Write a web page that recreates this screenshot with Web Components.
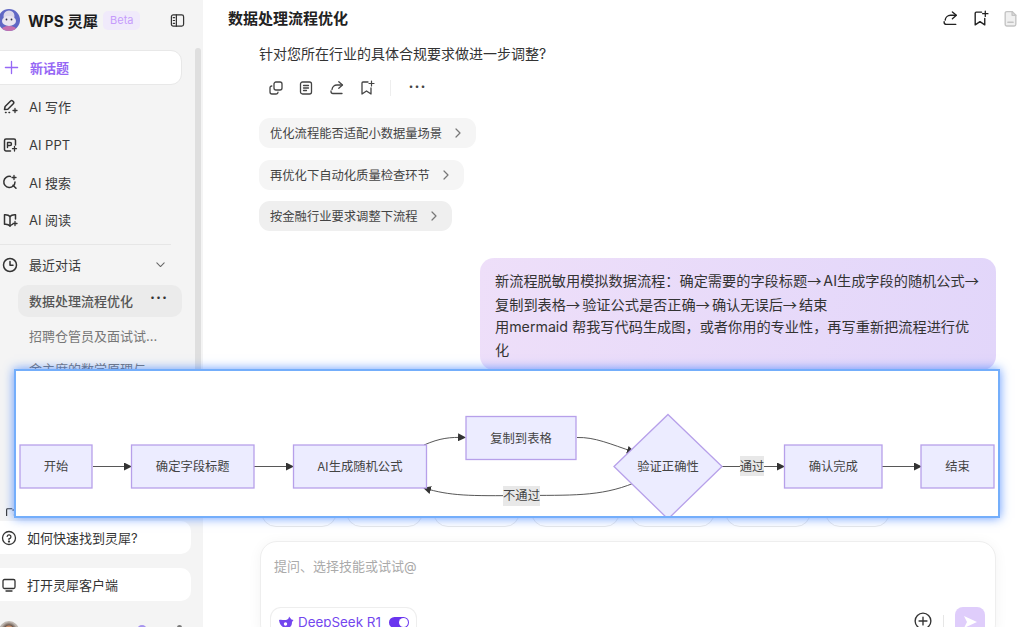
<!DOCTYPE html>
<html lang="zh"><head><meta charset="utf-8"><title>WPS 灵犀</title>
<style>
html,body{margin:0;height:100%;overflow:hidden;background:#fff}
body{font-family:Inter,"Noto Sans CJK SC",sans-serif;color:#222}
</style></head><body>
<app-shell>
  <side-bar slot="side"></side-bar>
  <main-pane slot="main"></main-pane>
</app-shell>
<flow-popup></flow-popup>
<script>
const I={
 plus:'<path d="M8 1.500v13M1.500 8h13" stroke-width="1.400"/>',
 write:'<path d="M2.500 10.500l.6-3L8.600 2a1.500 1.500 0 0 1 2.100 0l.6.6a1.500 1.500 0 0 1 0 2.100L5.800 10.200z" stroke-width="1.500"/><path d="M13 9.500v4M11 11.500h4" stroke-width="1.300"/><path d="M3.500 13.500h.6M7 13.500h.6" stroke-width="1.500"/>',
 ppt:'<path d="M8.500 14H4a1.500 1.500 0 0 1-1.500-1.500v-9A1.500 1.500 0 0 1 4 2h8a1.500 1.500 0 0 1 1.500 1.500V8" stroke-width="1.500"/><path d="M5.500 10.500V5.500H8a1.500 1.500 0 0 1 0 3H5.500" stroke-width="1.400"/><path d="M12.500 9.500v4.500M10.500 11.700h4" stroke-width="1.300"/>',
 search:'<path d="M8.500 2.400A5.600 5.600 0 1 0 13 8" stroke-width="1.500"/><path d="M11 11.200l3 3" stroke-width="1.500"/><path d="M12 1.500v4M10 3.500h4" stroke-width="1.300"/>',
 read:'<path d="M8 4.500C6.800 3 5 2.500 2.500 2.700v9.600C5 12 6.800 12.600 8 14c.7-.8 1.400-1.300 2.500-1.600" stroke-width="1.500"/><path d="M8 4.500v9.500M8 4.500C9.200 3 11 2.500 13.500 2.700V7" stroke-width="1.500"/><path d="M13 9.500v4M11 11.500h4" stroke-width="1.300"/>',
 clock:'<circle cx="8" cy="8" r="6.500" stroke-width="1.500"/><path d="M8 4.500V8.300h3" stroke-width="1.500"/>',
 down:'<path d="M3.500 6l4.500 4.500L12.500 6" stroke-width="1.300"/>',
 help:'<circle cx="8" cy="8" r="6.500"/><path d="M6.200 6.300A1.900 1.900 0 1 1 8 8.700v1"/><circle cx="8" cy="11.600" r=".5" fill="currentColor"/>',
 screen:'<rect x="2" y="2.500" width="12" height="9" rx="1.500"/><path d="M5 14h6"/>',
 panel:'<rect x="1.500" y="2" width="13" height="12" rx="2"/><path d="M6.800 2v12M3.500 5h1.400M3.500 8h1.400M3.500 11h1.400"/>',
 share:'<path d="M9.800 1.800l3.700 3.200-3.700 3.200"/><path d="M13 5H8a5 5 0 0 0-5 4.500"/><path d="M2 11v.5A2 2 0 0 0 4 13.500h9"/>',
 mark:'<path d="M9 2H4a1 1 0 0 0-1 1v11l4.500-3 4.500 3V8"/><path d="M12.500 1v5M10 3.500h5" stroke-width="1.200"/>',
 copy:'<rect x="6" y="2" width="8" height="8" rx="2"/><path d="M3.800 6A1.800 1.800 0 0 0 2 7.800V12a2 2 0 0 0 2 2h4.200A1.800 1.800 0 0 0 10 12.200"/>',
 note:'<rect x="2.500" y="2" width="11" height="12" rx="2"/><path d="M5.500 5.500h5M5.500 8h5M5.500 10.500h3"/>',
 doc:'<path d="M3 3a1.500 1.500 0 0 1 1.500-1.500H9.500L13 5v8.500A1.500 1.500 0 0 1 11.500 15h-7A1.500 1.500 0 0 1 3 13.500z" fill="#f0f0f0"/><path d="M9.500 1.500V5H13M5.500 11.500h5"/>',
 add:'<circle cx="8" cy="8" r="7" stroke-width="1.200"/><path d="M8 4.500v7M4.500 8h7" stroke-width="1.200"/>'
};
const icon=(n,s=16,c='currentColor')=>`<svg width="${s}" height="${s}" viewBox="0 0 16 16" fill="none" stroke="${c}" stroke-width="1.300" stroke-linecap="round" stroke-linejoin="round" style="display:block;flex:none">${I[n]}</svg>`;
class Base extends HTMLElement{
 constructor(){super();this.attachShadow({mode:'open'}).innerHTML=this.markup()}
 markup(){return ''}
}
customElements.define('app-shell',class extends Base{markup(){return `<style>
 :host{display:flex;width:1024px;height:627px;overflow:hidden}
 ::slotted([slot=side]){flex:none;width:203px}
 ::slotted([slot=main]){flex:1;min-width:0}
</style><slot name="side"></slot><slot name="main"></slot>`}});

customElements.define('nav-item',class extends Base{markup(){return `<style>
 :host{display:flex;align-items:center;height:37.700px;gap:11px;padding-left:2px;font-size:13px;color:#3a3a3a;flex:none}
</style>${icon(this.getAttribute('icon'),16,'#333')}<slot></slot>`}});

customElements.define('link-card',class extends Base{markup(){return `<style>
 :host{display:flex;align-items:center;gap:10px;height:33px;background:#fff;border-radius:10px;padding-left:11px;margin:0 -9px 0 -10px;font-size:13px;color:#333;flex:none}
</style>${icon(this.getAttribute('icon'),16,'#333')}<slot></slot>`}});

customElements.define('side-bar',class extends Base{markup(){return `<style>
 :host{display:flex;background:#f4f4f4;height:627px;overflow:hidden}
 .col{width:182px;flex:none;display:flex;flex-direction:column;height:627px;box-sizing:border-box}
 .brand{display:flex;align-items:center;height:40px;margin-left:-2px;flex:none}
 .brand b{font-size:15.300px;font-weight:700;color:#1c1c1c;margin-left:8px;white-space:nowrap}
 .beta{font-size:11px;color:#c69cfb;background:#f0eafb;border-radius:5px;height:19px;line-height:19px;padding:0 7px;margin-left:5px}
 .panel{margin-left:auto;margin-right:-3px;color:#333}
 .new{flex:none;display:flex;align-items:center;gap:11px;height:35px;margin:10px 0 3px -12px;padding-left:15px;background:#fff;border:1px solid #e8e8e8;border-radius:11px;font-size:13px;font-weight:600;color:#9668f5;box-sizing:border-box}
 hr{flex:none;border:0;border-top:1px solid #e6e6e6;margin:5px 11px 1px -6px;height:0;width:177px}
 .recent{flex:none;display:flex;align-items:center;gap:11px;height:38px;padding-left:2px;font-size:13px;color:#3a3a3a}
 .recent .chev{margin-left:auto;margin-right:15px;color:#666}
 .active{flex:none;display:flex;align-items:center;justify-content:space-between;height:32px;margin:1px 0 0 18px;padding:0 14px 0 11px;background:#ebebeb;border-radius:10px;font-size:13px;color:#555;font-weight:500}
 .dots{letter-spacing:1px;color:#333;font-size:15px;line-height:1;font-weight:700;margin-top:-6px}
 .hist{flex:none;height:33px;margin:3px 0 0 29px;font-size:13px;line-height:33px;color:#777;white-space:nowrap}
 .foot{margin-top:auto;display:flex;flex-direction:column;flex:none}
 .stub{height:9px;margin:0 0 5px 4px;color:#333;overflow:hidden}
 .gap{height:14px}
 .me{height:6px;margin-top:20px;margin-left:-1px;display:flex;align-items:flex-start}
 .me i{display:block;flex:none;width:20px;height:20px;border-radius:50%;background:radial-gradient(circle at 50% 45%,#c98f6c 0 4px,#6f5b50 5px,#bdb6b0 8px)}
 .me u{display:block;flex:none;width:10px;height:10px;border-radius:50%;background:#a694ee;margin:4px 0 0 118px}
 .me s{display:block;flex:none;width:5px;height:5px;border-radius:50%;background:#777;margin:4px 0 0 30px}
 .rail{flex:none;width:6px;height:452px;margin:48px 0 0 13px;background:#dfdfdf;border-radius:3px}
</style><div class="col">
 <div class="brand">
  <svg width="22" height="24" viewBox="0 0 22 24" style="flex:none"><defs><clipPath id="c"><circle cx="11" cy="12" r="11"/></clipPath></defs><g clip-path="url(#c)"><rect width="22" height="24" fill="#5f67c4"/><circle cx="11" cy="8" r="5.500" fill="#dcd8ea"/><ellipse cx="11" cy="13" rx="7" ry="5" fill="#e9e6f0"/><circle cx="8.500" cy="11.500" r=".9" fill="#334"/><circle cx="13.500" cy="11.500" r=".9" fill="#334"/><ellipse cx="11" cy="22" rx="8" ry="4" fill="#c56fae"/></g></svg>
  <b>WPS 灵犀</b><span class="beta">Beta</span><span class="panel">${icon('panel',15)}</span>
 </div>
 <div class="new">${icon('plus',15,'#9668f5')}新话题</div>
 <nav-item icon="write">AI 写作</nav-item>
 <nav-item icon="ppt">AI PPT</nav-item>
 <nav-item icon="search">AI 搜索</nav-item>
 <nav-item icon="read">AI 阅读</nav-item>
 <hr>
 <div class="recent">${icon('clock',16,'#333')}最近对话<span class="chev">${icon('down',13)}</span></div>
 <div class="active">数据处理流程优化<span class="dots">···</span></div>
 <div class="hist">招聘仓管员及面试试...</div>
 <div class="hist" style="margin-top:0">金主席的数学原理与</div>
 <div class="foot">
  <div class="stub">${icon('mark',14)}</div>
  <link-card icon="help">如何快速找到灵犀?</link-card>
  <div class="gap"></div>
  <link-card icon="screen">打开灵犀客户端</link-card>
  <div class="me"><i></i><u></u><s></s></div>
 </div>
</div><div class="rail"></div>`}});

customElements.define('suggest-chip',class extends Base{markup(){return `<style>
 :host{display:inline-flex;align-items:center;gap:12px;height:30px;padding:0 14px 0 11px;border-radius:11px;background:#f5f5f5;font-size:12.300px;color:#444;white-space:nowrap;align-self:flex-start}
 :host([hover]){background:#efefef}
</style><slot></slot><svg width="8" height="10" viewBox="0 0 8 10" fill="none" stroke="#777" stroke-width="1.200" stroke-linecap="round" stroke-linejoin="round"><path d="M2 1l4 4-4 4"/></svg>`}});

customElements.define('main-pane',class extends Base{markup(){return `<style>
 :host{display:flex;flex-direction:column;height:627px;overflow:hidden;background:#fff}
 header{flex:none;display:flex;align-items:center;height:34px;padding-left:25px;font-size:15px;font-weight:600;color:#222}
 .hi{margin-left:auto;display:flex;gap:13px;margin:2px 5px 0 auto;color:#222}
 .stream{flex:1;min-height:0;display:flex;flex-direction:column;padding:4px 0 0 56px;overflow:hidden}
 .q{font-size:14px;height:32px;line-height:32px;color:#333;flex:none}
 .tools{flex:none;display:flex;align-items:center;height:36px;gap:14.300px;padding-left:9px;color:#444;margin-bottom:12px}
 .sep{width:1px;height:16px;background:#eee;margin-left:1px}
 .dots{font-weight:700;font-size:15px;margin-left:3px;line-height:1;margin-top:-4px;letter-spacing:1px}
 .chips{flex:none;display:flex;flex-direction:column;gap:11.600px}
 .bubble{flex:none;align-self:flex-end;width:516px;height:112px;box-sizing:border-box;margin:26.800px 28px 0 0;padding:11px 15px;border-radius:14px;background:linear-gradient(100deg,#eedff9,#e2d6fa);font-size:14.200px;line-height:22.700px;color:#333}
 .ar{font-family:"Noto Sans CJK SC",sans-serif;letter-spacing:2px}
 .pills{margin-top:auto;flex:none;display:flex;padding-left:2px;height:30px}
 .pill{height:30px;box-sizing:border-box;border:1px solid #e9e9e9;border-radius:15px;flex:none}
 .composer{flex:none;margin:14px 28px -14px 57px;height:100px;box-sizing:border-box;border:1px solid #eee;border-radius:17px;box-shadow:0 2px 14px rgba(0,0,0,.05);padding:15px 10px 0 13px;background:#fff}
 .ph{font-size:13px;color:#aaa;height:50px;line-height:18px}
 .row{display:flex;align-items:flex-start;height:34px}
 .ds{display:flex;align-items:center;gap:4px;height:28px;box-sizing:content-box;border:1px solid #eee;border-bottom:0;border-radius:11px 11px 0 0;padding:0 7px;width:131px;margin-left:-4px;color:#7346ee;font-size:13.400px;line-height:16px}
 .tg{width:20px;height:11px;background:#6a35ef;border-radius:6px;position:relative;margin-left:auto}
 .tg::after{content:"";position:absolute;right:1px;top:1px;width:9px;height:9px;border-radius:50%;background:#fff}
 .end{margin-left:auto;display:flex;align-items:flex-start;padding-top:5px}
 .vr{width:1px;height:18px;background:#e6e6e6;margin:3px 11px 0 11px}
 .send{width:30px;height:30px;border-radius:8px;background:#dfcdfb;display:flex;align-items:center;justify-content:center;margin-top:-5px}
</style>
<header>数据处理流程优化<div class="hi">${icon('share',17)}${icon('mark',17)}${icon('doc',17,'#c4c4c4')}</div></header>
<div class="stream">
 <div class="q">针对您所在行业的具体合规要求做进一步调整?</div>
 <div class="tools">${icon('copy',16)}${icon('note',16)}${icon('share',16)}${icon('mark',16)}<span class="sep"></span><span class="dots">···</span></div>
 <div class="chips">
  <suggest-chip>优化流程能否适配小数据量场景</suggest-chip>
  <suggest-chip>再优化下自动化质量检查环节</suggest-chip>
  <suggest-chip hover>按金融行业要求调整下流程</suggest-chip>
 </div>
 <div class="bubble">新流程脱敏用模拟数据流程&#xFF1A;确定需要的字段标题<span class="ar">→</span>AI生成字段的随机公式<span class="ar">→</span><br>复制到表格<span class="ar">→</span>验证公式是否正确<span class="ar">→</span>确认无误后<span class="ar">→</span>结束<br>用mermaid 帮我写代码生成图&#xFF0C;或者你用的专业性&#xFF0C;再写重新把流程进行优化</div>
 <div class="pills">
  <div class="pill" style="width:76px"></div><div class="pill" style="width:77px;margin-left:9px"></div><div class="pill" style="width:87px;margin-left:10px"></div><div class="pill" style="width:89px;margin-left:11px"></div><div class="pill" style="width:85px;margin-left:10px"></div><div class="pill" style="width:86px;margin-left:10px"></div><div class="pill" style="width:65px;margin-left:14px"></div>
 </div>
</div>
<div class="composer">
 <div class="ph">提问、选择技能或试试@</div>
 <div class="row">
  <div class="ds"><svg width="16" height="15" viewBox="0 0 16 14" style="flex:none"><path d="M1 4.500c.5 5.500 5 9 9 8 3-.8 4-3 4-6l1.500-2-2-.5L11 1c0 2-1 3-3 3.500C6 5 3 3.500 1 4.500z" fill="#7346ee"/><circle cx="7.500" cy="8.500" r="1.700" fill="#fff"/></svg>DeepSeek R1<span class="tg"></span></div>
  <div class="end">${icon('add',18,'#333')}<span class="vr"></span><span class="send"><svg width="16" height="16" viewBox="0 0 16 16"><path d="M2 2l13 6-13 6 3-6z" fill="#fff"/></svg></span></div>
 </div>
</div>`}});

customElements.define('flow-popup',class extends Base{markup(){
 const box=(x,w,t,y=445,h=43)=>`<rect x="${x}" y="${y}" width="${w}" height="${h}"/><text x="${x+w/2}" y="${y+h/2+4.500}">${t}</text>`;
 return `<style>
 :host{position:absolute;left:14px;top:369px;width:986px;height:149px;box-sizing:border-box;background:#fff;border:2px solid #74aefb;box-shadow:0 0 10px rgba(50,120,255,.75);overflow:hidden;display:block}
 svg{display:block;position:absolute;left:-16px;top:-371px}
 .n rect,.n polygon{fill:#ececff;stroke:#b7a0ea;stroke-width:1.300}
 text{font:12.300px "Noto Sans CJK SC",sans-serif;fill:#444;text-anchor:middle}
 .e{fill:none;stroke:#444;stroke-width:.9}
 .l{fill:#e8e8e8}
</style>
<svg width="1024" height="627" viewBox="0 0 1024 627">
 <defs><marker id="a" viewBox="0 0 8 8" refX="7" refY="4" markerWidth="8" markerHeight="8" orient="auto" markerUnits="userSpaceOnUse"><path d="M0 0l8 4-8 4z" fill="#333"/></marker></defs>
 <g class="e">
  <path marker-end="url(#a)" d="M93 466.500H131"/>
  <path marker-end="url(#a)" d="M254 466.500H293"/>
  <path marker-end="url(#a)" d="M424 445C440 438 450 437 465 437.500"/>
  <path marker-end="url(#a)" d="M577 437.500C595 437 610 444 634 452"/>
  <path marker-end="url(#a)" d="M722 466.500H784"/>
  <path marker-end="url(#a)" d="M882 466.500H921"/>
  <path marker-end="url(#a)" d="M634 483C600 497 570 495 521 495.500C470 496 450 496 424 488"/>
 </g>
 <g class="n">
  ${box(20,72,'开始')}${box(131.500,122.500,'确定字段标题')}${box(293.500,133,'AI生成随机公式')}${box(466,110,'复制到表格',416.500,43)}
  <polygon points="668,414.500 722,466.500 668,519 614,466.500"/><text x="668" y="471">验证正确性</text>
  ${box(784.500,97.500,'确认完成')}${box(921,73,'结束')}
 </g>
 <rect class="l" x="740" y="456" width="24" height="20"/><text x="752" y="471">通过</text>
 <rect class="l" x="503" y="486" width="37" height="20"/><text x="521.500" y="500">不通过</text>
</svg>`}});
</script>
</body></html>
